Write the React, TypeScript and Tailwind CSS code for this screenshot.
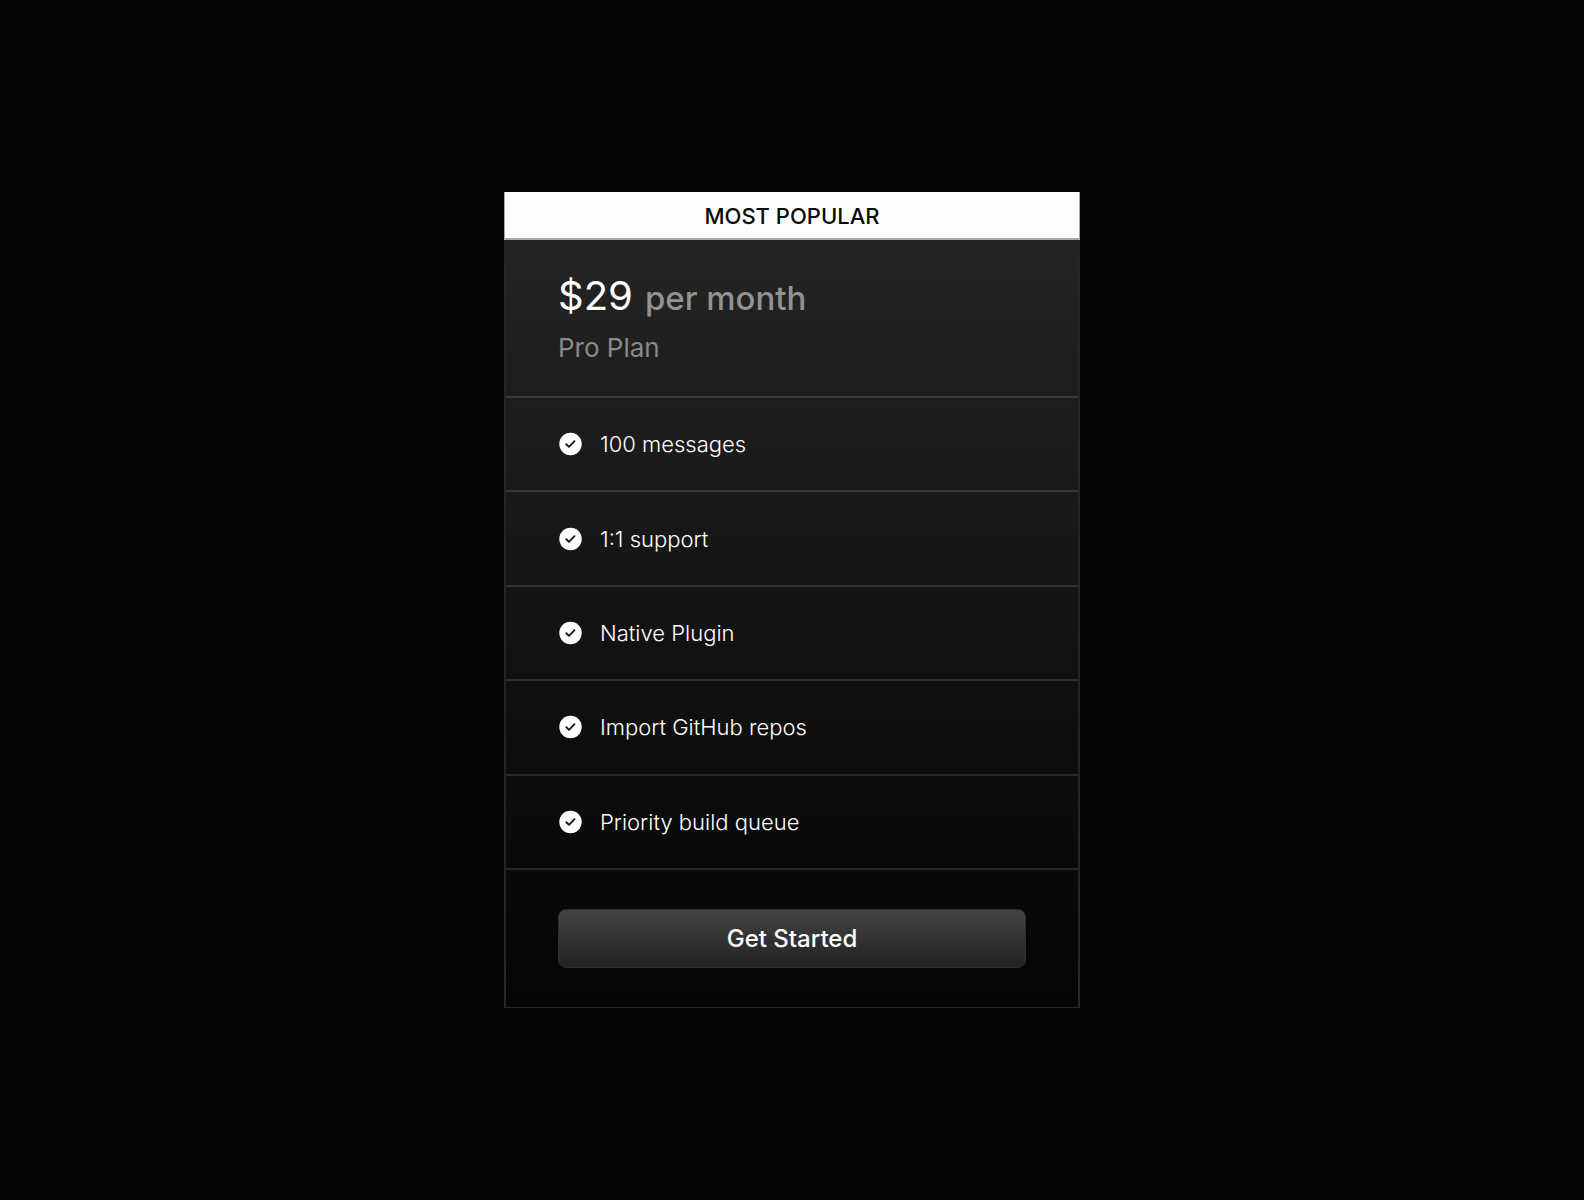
import React from 'react';

const features = [
  '100 messages',
  '1:1 support',
  'Native Plugin',
  'Import GitHub repos',
  'Priority build queue',
];

const CheckBadge = () => (
  <svg viewBox="0 0 24 24" className="size-6 shrink-0" aria-hidden="true">
    <circle cx="12.5" cy="12" r="11.2" fill="#ffffff" />
    <path
      d="M8.3 12.2 L11 14.8 L16.5 9.2"
      fill="none"
      stroke="#1a1a1a"
      strokeWidth="1.9"
      strokeLinecap="round"
      strokeLinejoin="round"
    />
  </svg>
);

export default function App() {
  return (
    <main className="min-h-screen bg-[#050505] flex items-center justify-center font-['Inter',sans-serif]">
      <section className="w-full max-w-xl border-x-2 border-b border-[#262626] bg-linear-to-b from-[#272727] to-[#050505] to-98%">
        <div className="-mx-0.5 h-12 pt-0.5 flex items-center justify-center bg-[#fdfdfd] border-x border-b-2 border-[#a8a8a8] text-[22px] leading-7 font-medium text-[#0a0a0a]">
          MOST POPULAR
        </div>

        <header className="h-[158px] px-13 pt-8 border-b-2 border-white/12">
          <h2 className="flex items-baseline gap-3 leading-12">
            <span className="text-[40px] font-normal text-white">$29</span>
            <span className="text-[33px] font-medium text-[#929292]">per month</span>
          </h2>
          <p className="mt-2 text-[26px] leading-9 text-[#8a8a8a]">Pro Plan</p>
        </header>

        <ul className="h-[472px] grid auto-rows-fr">
          {features.map(feature => (
            <li
              key={feature}
              className="px-13 flex items-center gap-[18px] border-b-2 border-white/12 text-[22px] leading-7 font-light text-white"
            >
              <CheckBadge />
              {feature}
            </li>
          ))}
        </ul>

        <div className="px-13 py-[39px]">
          <button
            type="button"
            className="w-full h-[59px] rounded-lg border border-[#2e2e2e] bg-linear-to-b from-[#444444] to-[#222222] text-[24px] leading-7 font-medium text-white"
          >
            Get Started
          </button>
        </div>
      </section>
    </main>
  );
}
